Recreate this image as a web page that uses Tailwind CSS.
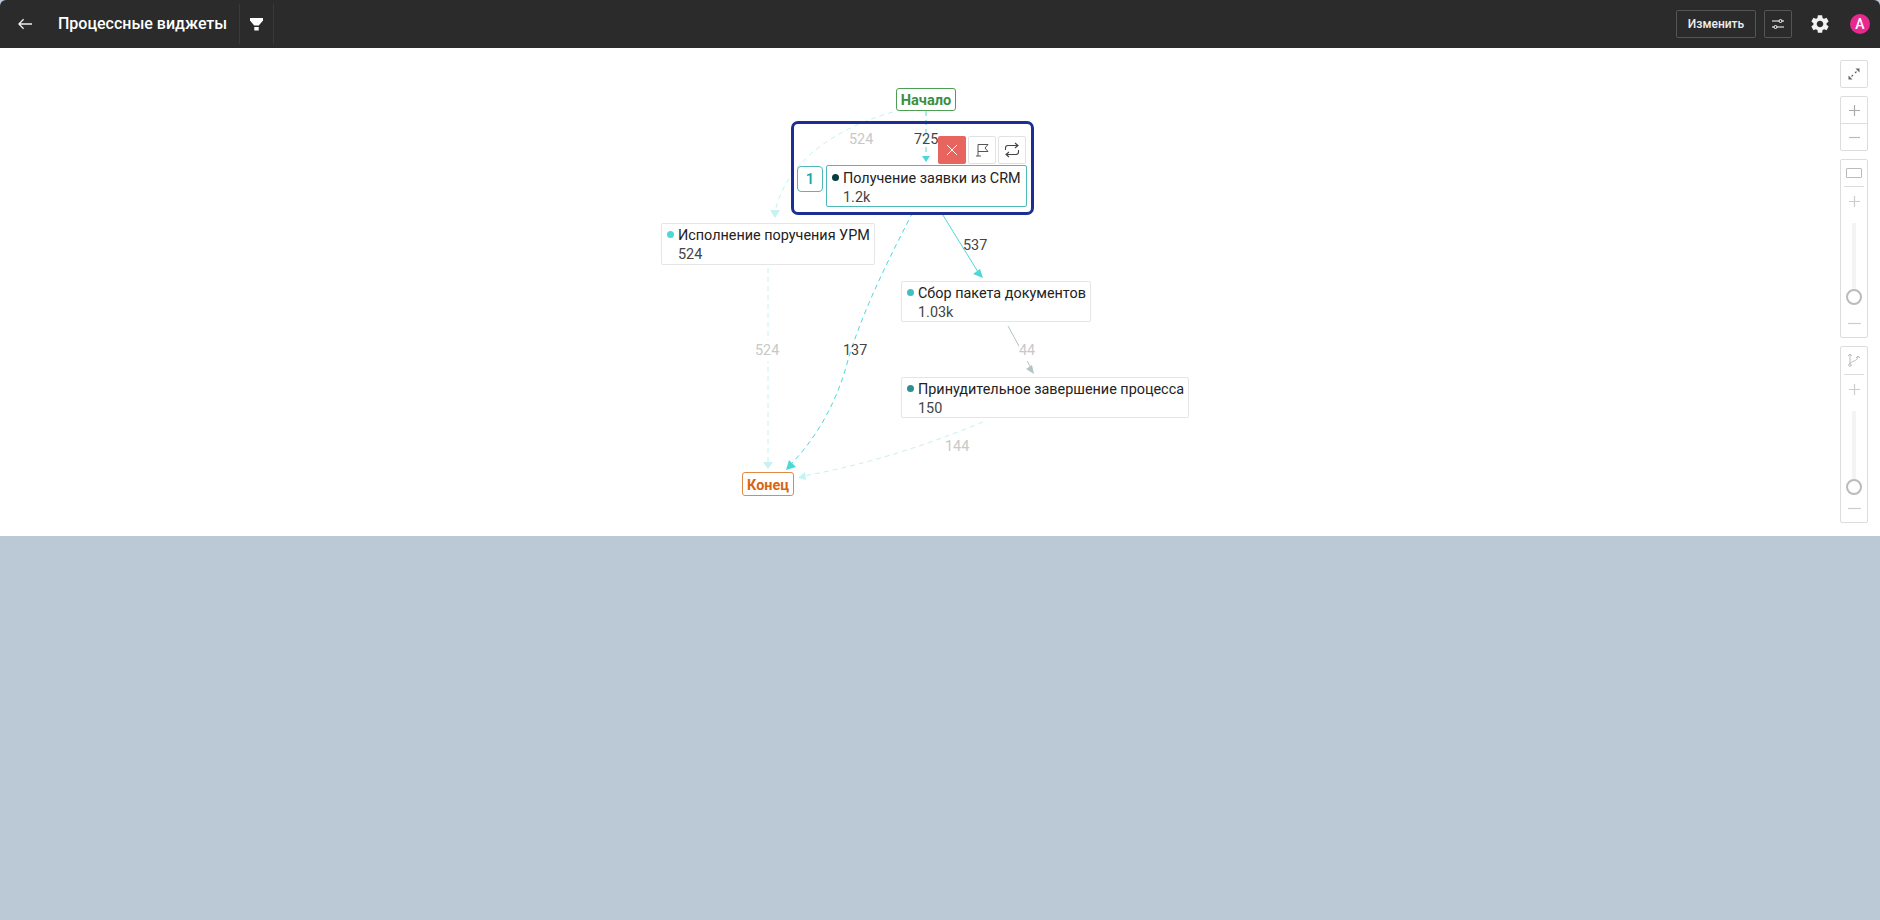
<!DOCTYPE html>
<html>
  <head>
    <meta charset="UTF-8" />
    <title>Процессные виджеты</title>
    <script src="https://cdn.jsdelivr.net/npm/@tailwindcss/browser@4"></script>
  </head>
  <body class="h-[920px] w-[1880px] overflow-hidden flex flex-col bg-[#bbc8d5] font-['Roboto',sans-serif]">
    <!-- header -->
    <header class="h-12 shrink-0 bg-[#2b2b2b] flex items-center text-white rounded-t-md">
      <button class="ml-[18px] w-[14px] flex">
        <svg width="15" height="12" viewBox="0 0 15 12" fill="none" stroke="#eee" stroke-width="1.4"><path d="M15 6H1M6 1 1 6l5 5" /></svg>
      </button>
      <h1 class="ml-[26px] w-[181px] text-base font-medium whitespace-nowrap">Процессные виджеты</h1>
      <div class="h-10 w-[35px] border-x border-[#3a3a3a] flex items-center justify-center">
        <svg width="13" height="13" viewBox="0 0 13 13" fill="#fff"><path d="M0 0h13v2.500L8.800 7.500H4.200L0 2.500Z" /><path d="M4.300 9h4.400v3.500H4.300Z" /></svg>
      </div>
      <div class="ml-auto flex items-center">
        <button class="h-7 w-20 border border-[#555] rounded-[2px] text-xs font-medium text-[#eee]">Изменить</button>
        <button class="ml-2 h-7 w-7 border border-[#555] rounded-[2px] flex items-center justify-center">
          <svg width="14" height="14" viewBox="0 0 14 14" fill="none" stroke="#fff" stroke-width="1"><path d="M1 4h7M11 4h2M1 10h2M6 10h7" /><circle cx="9.500" cy="4" r="1.500" /><circle cx="4.500" cy="10" r="1.500" /></svg>
        </button>
        <svg class="ml-[17px]" width="22" height="22" viewBox="0 0 24 24" fill="#f2f2f2"><path d="M19.140 12.940c.04-.3.06-.61.06-.94 0-.32-.02-.64-.07-.94l2.030-1.580c.18-.14.23-.41.12-.61l-1.920-3.320c-.12-.22-.37-.29-.59-.22l-2.390.96c-.5-.38-1.030-.7-1.620-.94l-.36-2.540c-.04-.24-.24-.41-.48-.41h-3.840c-.24 0-.43.17-.47.41l-.36 2.540c-.59.24-1.130.57-1.620.94l-2.390-.96c-.22-.08-.47 0-.59.22L2.740 8.870c-.12.21-.08.47.12.61l2.030 1.580c-.05.3-.09.63-.09.94s.02.64.07.94l-2.030 1.580c-.18.14-.23.41-.12.61l1.920 3.320c.12.22.37.29.59.22l2.390-.96c.5.38 1.030.7 1.620.94l.36 2.540c.05.24.24.41.48.41h3.840c.24 0 .44-.17.47-.41l.36-2.540c.59-.24 1.130-.56 1.620-.94l2.390.96c.22.08.47 0 .59-.22l1.920-3.320c.12-.22.07-.47-.12-.61l-2.010-1.580zM12 15.600c-1.980 0-3.600-1.620-3.600-3.600s1.620-3.600 3.600-3.600 3.600 1.620 3.600 3.600-1.620 3.600-3.600 3.600z" /></svg>
        <div class="ml-[19px] mr-[10px] w-5 h-5 rounded-full bg-[#e9288f] flex items-center justify-center text-sm font-medium">A</div>
      </div>
    </header>

    <!-- canvas -->
    <main class="relative h-[488px] shrink-0 bg-white">
      <svg class="absolute inset-0" width="1880" height="488" fill="none">
        <g transform="translate(0 -48)" stroke-width="1">
          <path d="M893 112C830 130 785 165 775 212" stroke="#c5f2f2" stroke-dasharray="5 4" />
          <path d="M775 218l-5-8h10Z" fill="#c5f2f2" />
          <path d="M926 111V156" stroke="#4dd8d8" stroke-dasharray="5 4" />
          <path d="M926 162l-4-6h8Z" fill="#4dd8d8" />
          <path d="M913 212C880 275 860 320 848 360C835 410 810 445 790 465" stroke="#4dd8d8" stroke-dasharray="5 4" />
          <path d="M786 470l3-10 7 7Z" fill="#4dd8d8" />
          <path d="M941 212L978 272" stroke="#4dd8d8" />
          <path d="M983 278l-10-4 7-5Z" fill="#4dd8d8" />
          <path d="M1008 326L1031 368" stroke="#b3c4c4" />
          <path d="M1034 374l-8-5 6-4Z" fill="#b3c4c4" />
          <path d="M768 268V462" stroke="#c5f2f2" stroke-dasharray="5 4" />
          <path d="M768 469l-5-7h10Z" fill="#c5f2f2" />
          <path d="M983 422C920 448 860 466 803 476" stroke="#c5f2f2" stroke-dasharray="5 4" />
          <path d="M798 478l7-6 1 8Z" fill="#c5f2f2" />
        </g>
      </svg>

      <!-- selection -->
      <div class="absolute left-[791px] top-[73px] w-[243px] h-[94px] border-[3px] border-[#1c2e96] rounded-[7px]"></div>

      <!-- edge labels -->
      <span class="absolute left-[849px] top-[82px] text-[14.4px] leading-5 text-[#c8c8c8]">524</span>
      <span class="absolute left-[914px] top-[82px] text-[14.4px] leading-5 text-[#444]">725</span>
      <span class="absolute left-[963px] top-[188px] text-[14.4px] leading-5 text-[#444]">537</span>
      <span class="absolute left-[1019px] top-[293px] bg-white text-[14.4px] leading-5 text-[#c8c8c8]">44</span>
      <span class="absolute left-[755px] top-[293px] bg-white text-[14.4px] leading-5 text-[#c8c8c8]">524</span>
      <span class="absolute left-[843px] top-[293px] text-[14.4px] leading-5 text-[#444]">137</span>
      <span class="absolute left-[945px] top-[389px] text-[14.4px] leading-5 text-[#c8c8c8]">144</span>

      <!-- terminals -->
      <div class="absolute left-[896px] top-[40px] w-[60px] h-[23px] pt-[3px] border border-[#4f9e55] rounded-[3px] flex items-center justify-center text-[14.6px] font-bold text-[#3a8f41]">Начало</div>
      <div class="absolute left-[742px] top-[424px] w-[52px] h-[24px] pt-[3px] border border-[#e08a45] rounded-[3px] flex items-center justify-center text-[14.4px] font-bold text-[#d9660f]">Конец</div>

      <!-- selected node tools -->
      <div class="absolute left-[938px] top-[88px] flex gap-0.5">
        <button class="w-7 h-7 bg-[#e8645f] rounded-[2px] flex items-center justify-center">
          <svg width="12" height="12" viewBox="0 0 12 12" stroke="#fff" stroke-width="1"><path d="M1 1l10 10M11 1 1 11" /></svg>
        </button>
        <button class="w-7 h-7 border border-[#e2e2e2] rounded-[2px] flex items-center justify-center">
          <svg width="16" height="16" viewBox="0 0 16 16" fill="none" stroke="#555" stroke-width="1"><path d="M4 14V2.500h10L11 6l3 3.500H4M2 14h5" /></svg>
        </button>
        <button class="w-7 h-7 border border-[#e2e2e2] rounded-[2px] flex items-center justify-center">
          <svg width="16" height="16" viewBox="0 0 16 16" fill="none" stroke="#444" stroke-width="1.100"><path d="M11 1l3 2.500L11 6M14 3.500H4A2.500 2.500 0 0 0 1.500 6v2M5 15l-3-2.500L5 10M2 12.500h10A2.500 2.500 0 0 0 14.500 10V8" /></svg>
        </button>
      </div>

      <div class="absolute left-[797px] top-[118px] w-[26px] h-[26px] border border-[#4fb8b8] rounded-[4px] flex items-center justify-center text-[15px] font-medium text-[#12a8a8]">1</div>

      <!-- nodes -->
      <div class="absolute left-[826px] top-[117px] w-[201px] h-[42px] border border-[#4fb8b8] rounded-[2px] bg-white pl-4 pt-[3px] text-[14.4px] leading-[19px] text-[#222]">
        <span class="absolute left-[5px] top-[8px] w-[7px] h-[7px] rounded-full bg-[#083d3d]"></span>
        <div class="whitespace-nowrap">Получение заявки из CRM</div>
        <div class="text-[#444]">1.2k</div>
      </div>
      <div class="absolute left-[661px] top-[175px] w-[214px] h-[42px] border border-[#e5e5e5] rounded-[2px] bg-white pl-4 pt-[2px] text-[14.4px] leading-[19px] text-[#222]">
        <span class="absolute left-[5px] top-[7px] w-[7px] h-[7px] rounded-full bg-[#4dd8d8]"></span>
        <div class="whitespace-nowrap">Исполнение поручения УРМ</div>
        <div class="text-[#444]">524</div>
      </div>
      <div class="absolute left-[901px] top-[233px] w-[190px] h-[41px] border border-[#e5e5e5] rounded-[2px] bg-white pl-4 pt-[2px] text-[14.4px] leading-[19px] text-[#222]">
        <span class="absolute left-[5px] top-[7px] w-[7px] h-[7px] rounded-full bg-[#3fc0c0]"></span>
        <div class="whitespace-nowrap">Сбор пакета документов</div>
        <div class="text-[#444]">1.03k</div>
      </div>
      <div class="absolute left-[901px] top-[329px] w-[288px] h-[41px] border border-[#e5e5e5] rounded-[2px] bg-white pl-4 pt-[2px] text-[14.4px] leading-[19px] text-[#222]">
        <span class="absolute left-[5px] top-[7px] w-[7px] h-[7px] rounded-full bg-[#2a9090]"></span>
        <div class="whitespace-nowrap">Принудительное завершение процесса</div>
        <div class="text-[#444]">150</div>
      </div>

      <!-- toolbar -->
      <div class="absolute left-[1840px] top-3 w-7 flex flex-col gap-2">
        <button class="h-7 border border-[#ddd] rounded-[2px] flex items-center justify-center">
          <svg width="12" height="12" viewBox="0 0 12 12" fill="none"><path d="M11.500.5v4l-4-4Z" fill="#666" /><path d="M.5 11.500v-4l4 4Z" fill="#666" /><path d="M8.500 3.500l-1.500 1.500M5 7 3.500 8.500" stroke="#666" stroke-width="1.200" /></svg>
        </button>
        <div class="h-[55px] border border-[#ddd] rounded-[2px] flex flex-col">
          <button class="h-[27px] border-b border-[#ddd] flex items-center justify-center">
            <svg width="13" height="13" viewBox="0 0 13 13" stroke="#aaa" stroke-width="1.200"><path d="M6.500 1v11M1 6.500h11" /></svg>
          </button>
          <button class="flex-1 flex items-center justify-center">
            <svg width="13" height="13" viewBox="0 0 13 13" stroke="#bbb" stroke-width="1.200"><path d="M1 6.500h11" /></svg>
          </button>
        </div>
        <div class="h-[179px] border border-[#ddd] rounded-[2px] flex flex-col items-center">
          <div class="mt-[8px] w-[16px] h-[10px] border border-[#bbb] rounded-[1px]"></div>
          <div class="mt-[8px] w-5 border-t border-[#ddd]"></div>
          <svg class="mt-[8px]" width="13" height="13" viewBox="0 0 13 13" stroke="#ccc" stroke-width="1.200"><path d="M6.500 1v11M1 6.500h11" /></svg>
          <div class="relative mt-[15px] w-1 h-[74px] bg-[#f4f4f4]">
            <span class="absolute left-[-6px] top-[66px] w-4 h-4 rounded-full border-2 border-[#bbb] bg-white"></span>
          </div>
          <svg class="mt-[20px]" width="13" height="13" viewBox="0 0 13 13" stroke="#ccc" stroke-width="1.200"><path d="M0 6.500h13" /></svg>
        </div>
        <div class="h-[177px] border border-[#ddd] rounded-[2px] flex flex-col items-center">
          <svg class="mt-[5px]" width="16" height="16" viewBox="0 0 16 16" fill="none" stroke="#bbb" stroke-width="1"><path d="M4 2v10M2 4l2-2 2 2M4 12c0-3 8-2 8-8M10 6l2-2 2 2" /><circle cx="4" cy="13" r="1.300" /></svg>
          <div class="mt-[6px] w-5 border-t border-[#ddd]"></div>
          <svg class="mt-[8px]" width="13" height="13" viewBox="0 0 13 13" stroke="#ccc" stroke-width="1.200"><path d="M6.500 1v11M1 6.500h11" /></svg>
          <div class="relative mt-[15px] w-1 h-[76px] bg-[#f4f4f4]">
            <span class="absolute left-[-6px] top-[68px] w-4 h-4 rounded-full border-2 border-[#bbb] bg-white"></span>
          </div>
          <svg class="mt-[15px]" width="13" height="13" viewBox="0 0 13 13" stroke="#ccc" stroke-width="1.200"><path d="M0 6.500h13" /></svg>
        </div>
      </div>
    </main>
    <div class="flex-1 bg-[#bbc8d5]"></div>
  </body>
</html>
